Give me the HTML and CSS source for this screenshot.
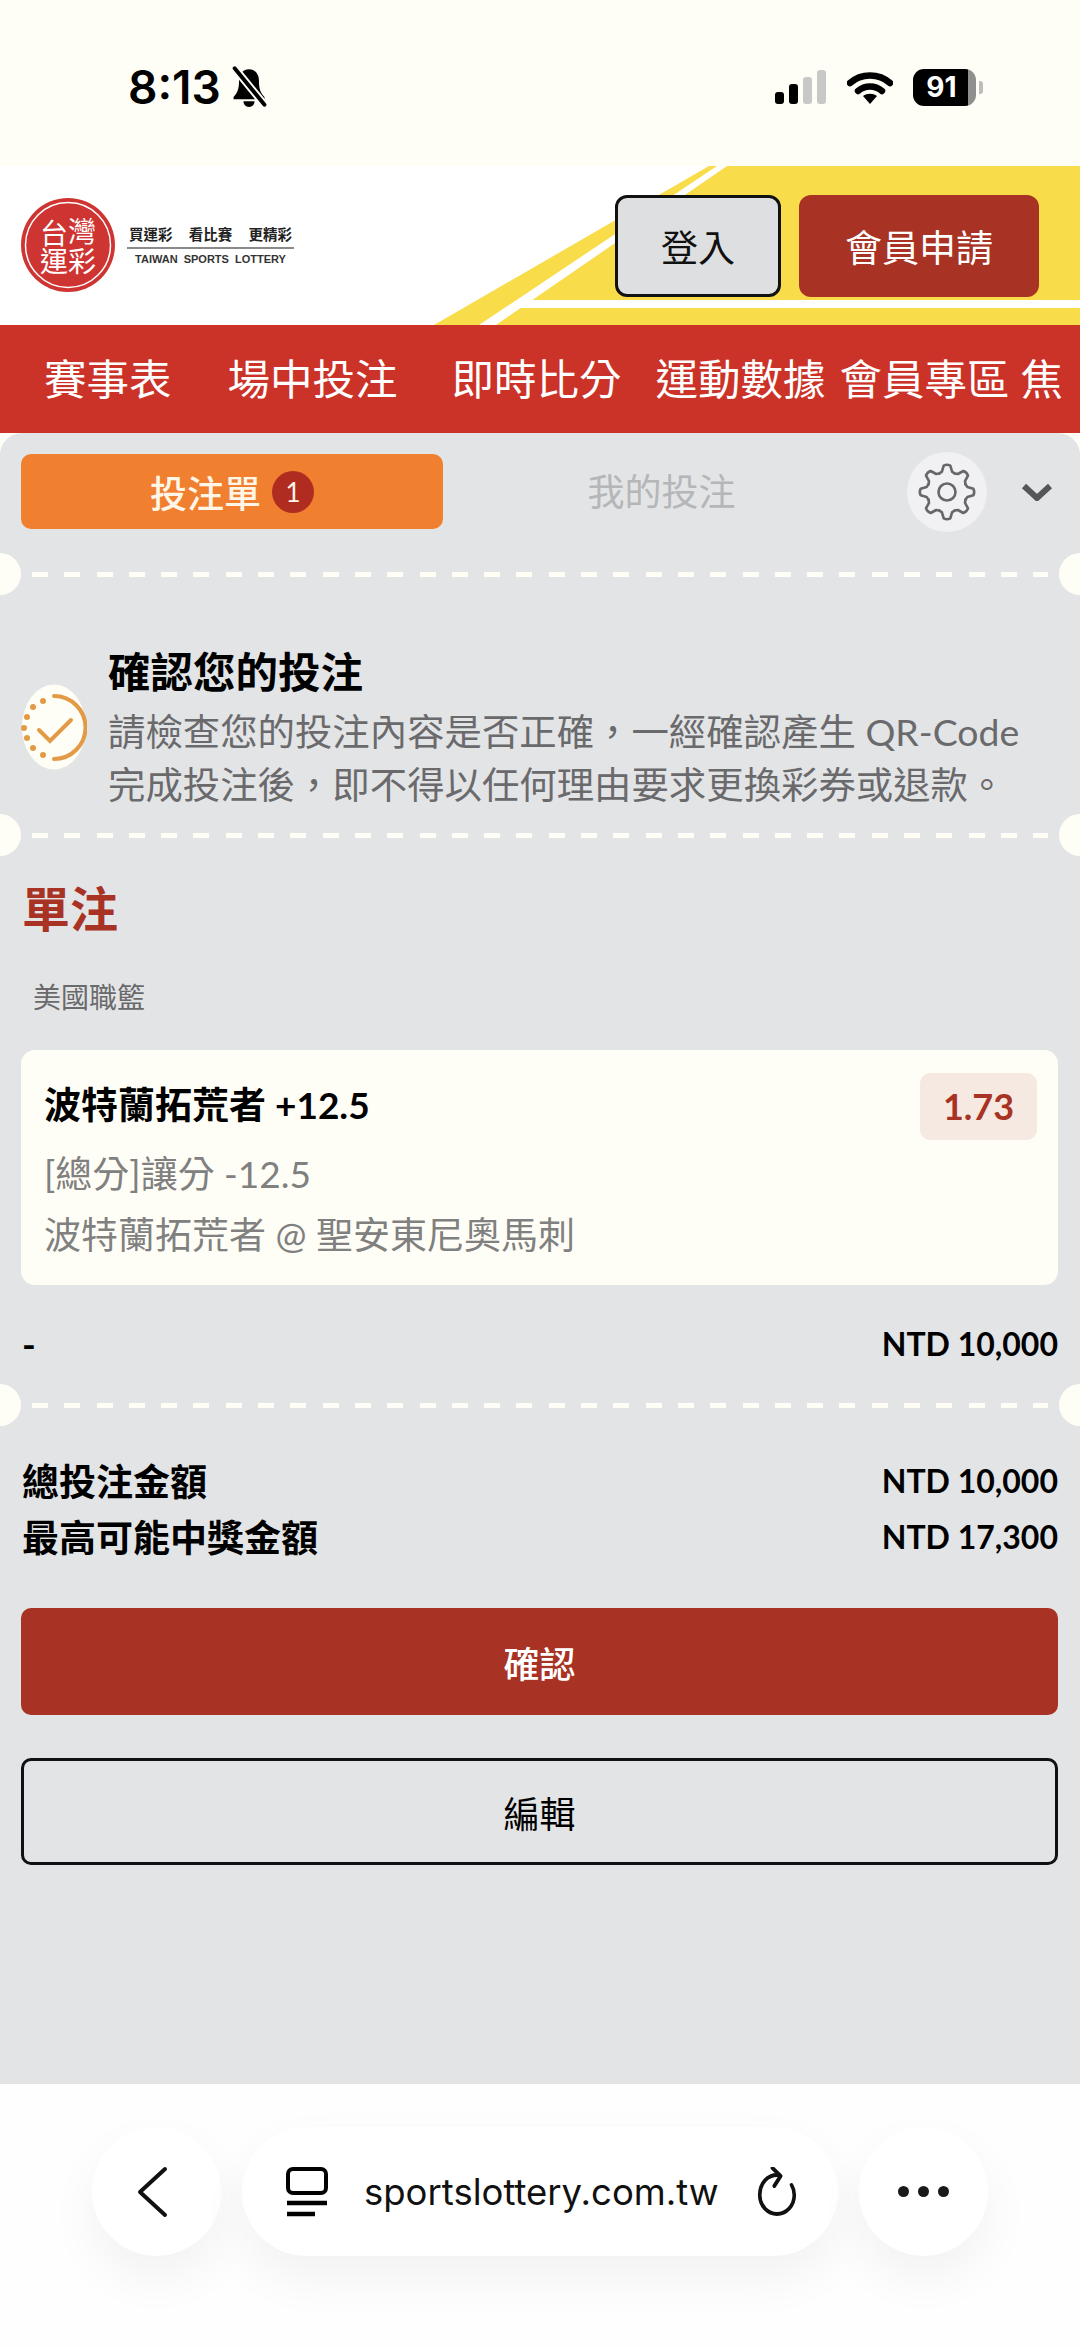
FILE: index.html
```html
<!DOCTYPE html>
<html lang="zh-TW">
<head>
    <meta charset="utf-8">
    <title>投注單</title>
    <link rel="stylesheet" href="styles.css">
</head>

<body>
<div class="page">
    <!-- 狀態列 -->
    <div class="statusBar">
        <div class="statusLeft">
            <span class="clock">8:13</span>
            <svg class="bell" viewBox="0 0 36 38" width="40" height="42">
                <path d="M18 3c-6 0-9 5-9 10 0 7-1 11-5 15v2h28v-2c-4-4-5-8-5-15 0-5-3-10-9-10z" fill="#000"/>
                <path d="M13 32c0 3 2 5 5 5s5-2 5-5z" fill="#000"/>
                <path d="M5 2l27 33" stroke="#fffef6" stroke-width="7"/>
                <path d="M5 2l27 33" stroke="#000" stroke-width="3.5" stroke-linecap="round"/>
            </svg>
        </div>
        <div class="statusRight">
            <svg viewBox="0 0 52 34" width="52" height="34">
                <rect x="0" y="22" width="9" height="12" rx="3" fill="#000"/>
                <rect x="14" y="14" width="9" height="20" rx="3" fill="#000"/>
                <rect x="28" y="7" width="9" height="27" rx="3" fill="#c8c8c6"/>
                <rect x="42" y="0" width="9" height="34" rx="3" fill="#c8c8c6"/>
            </svg>
            <svg class="wifi" viewBox="0 0 46 33" width="46" height="33">
                <path d="M3 12c11-10 29-10 40 0" fill="none" stroke="#000" stroke-width="6.5" stroke-linecap="round"/>
                <path d="M11 20c7-6 17-6 24 0" fill="none" stroke="#000" stroke-width="6.5" stroke-linecap="round"/>
                <path d="M23 33l-7-8c4-3 10-3 14 0z" fill="#000"/>
            </svg>
            <div class="battery"><span class="batteryNum">91</span></div>
            <span class="batteryNub"></span>
        </div>
    </div>

    <!-- 標頭 -->
    <header class="siteHeader">
        <svg class="headerBg" viewBox="0 0 1080 159" width="1080" height="159">
            <polygon points="709,0 1080,0 1080,159 434,159" fill="#f9dc4a"/>
            <polygon points="717,0 727,0 496,159 479,159" fill="#fff"/>
            <rect x="521" y="134" width="559" height="8" fill="#fff"/>
        </svg>
        <div class="logo">
            <svg class="logoMark" viewBox="0 0 96 96" width="96" height="96">
                <circle cx="48" cy="48" r="47" fill="#ce3431"/>
                <circle cx="48" cy="48" r="42.5" fill="none" stroke="#fff" stroke-width="1.5"/>
                <text class="logoChar" x="20" y="47">台</text>
                <text class="logoChar" x="48" y="45">灣</text>
                <text class="logoChar" x="20" y="75">運</text>
                <text class="logoChar" x="48" y="75">彩</text>
            </svg>
            <div class="logoText">
                <div class="logoSlogan"><span>買運彩</span><span>看比賽</span><span>更精彩</span></div>
                <div class="logoEng">TAIWAN SPORTS LOTTERY</div>
            </div>
        </div>
        <div class="headerBtns">
            <button class="loginBtn">登入</button>
            <button class="joinBtn">會員申請</button>
        </div>
    </header>

    <!-- 主選單 -->
    <nav class="mainNav">
        <span class="navItem">賽事表</span>
        <span class="navItem">場中投注</span>
        <span class="navItem">即時比分</span>
        <span class="navItem">運動數據</span>
        <span class="navItem">會員專區</span>
        <span class="navItem">焦</span>
    </nav>

    <!-- 投注單 -->
    <main class="slip">
        <div class="tabs">
            <div class="tabActive">投注單<span class="tabBadge">1</span></div>
            <div class="tabOther">我的投注</div>
            <div class="gearWrap">
                <svg viewBox="0 0 60 60" width="60" height="60">
                    <defs>
                        <path id="tooth" d="M22.35 11.52L24.92 9.62 26.71 3.6Q30 2 33.29 3.6L35.08 9.62 37.65 11.52"/>
                    </defs>
                    <g fill="none" stroke="#66676a" stroke-width="2.6" stroke-linejoin="round" stroke-linecap="round">
                        <use href="#tooth"/>
                        <use href="#tooth" transform="rotate(45 30 30)"/>
                        <use href="#tooth" transform="rotate(90 30 30)"/>
                        <use href="#tooth" transform="rotate(135 30 30)"/>
                        <use href="#tooth" transform="rotate(180 30 30)"/>
                        <use href="#tooth" transform="rotate(225 30 30)"/>
                        <use href="#tooth" transform="rotate(270 30 30)"/>
                        <use href="#tooth" transform="rotate(315 30 30)"/>
                        <circle cx="30" cy="30" r="8.5"/>
                    </g>
                </svg>
            </div>
            <svg class="chevron" viewBox="0 0 32 18" width="32" height="18">
                <path d="M3 3l13 12L29 3" fill="none" stroke="#55565a" stroke-width="6"/>
            </svg>
        </div>

        <div class="perf perfTop"></div>

        <section class="notice">
            <svg class="noticeIcon" viewBox="0 0 66 86" width="66" height="86">
                <ellipse cx="33" cy="43" rx="32" ry="42.5" fill="#fffef6"/>
                <g fill="none" stroke="#e39a45" stroke-width="4" stroke-linecap="round">
                    <path d="M33 12a31.500 31.500 0 0 1 0 63"/>
                    <path d="M18 46l11 11 21-21"/>
                </g>
                <g fill="#e39a45">
                    <circle cx="22" cy="17" r="3"/>
                    <circle cx="12" cy="23" r="3"/>
                    <circle cx="6" cy="33" r="3"/>
                    <circle cx="3" cy="44" r="3"/>
                    <circle cx="6" cy="54" r="3"/>
                    <circle cx="12" cy="64" r="3"/>
                    <circle cx="22" cy="71" r="3"/>
                </g>
            </svg>
            <div class="noticeText">
                <h2 class="noticeTitle">確認您的投注</h2>
                <p class="noticeDesc">請檢查您的投注內容是否正確，一經確認產生 QR-Code<br>完成投注後，即不得以任何理由要求更換彩券或退款。</p>
            </div>
        </section>

        <div class="perf"></div>

        <h1 class="betType">單注</h1>
        <div class="league">美國職籃</div>

        <div class="betCard">
            <div class="betMain">
                <div class="betTitle">波特蘭拓荒者 +12.5</div>
                <div class="oddsChip">1.73</div>
            </div>
            <div class="betSub">[總分]讓分 -12.5</div>
            <div class="betSub">波特蘭拓荒者 @ 聖安東尼奧馬刺</div>
        </div>

        <div class="amountRow stakeRow"><span>-</span><span class="money">NTD 10,000</span></div>

        <div class="perf perfLast"></div>

        <div class="amountRow totalRow"><span>總投注金額</span><span class="money">NTD 10,000</span></div>
        <div class="amountRow totalRow"><span>最高可能中獎金額</span><span class="money">NTD 17,300</span></div>

        <button class="confirmBtn">確認</button>
        <button class="editBtn">編輯</button>
    </main>

    <!-- 瀏覽器工具列 -->
    <footer class="browserBar">
        <div class="roundBtn">
            <svg class="backIcon" viewBox="0 0 32 52" width="32" height="52">
                <path d="M29 3L4 26l25 23" fill="none" stroke="#111" stroke-width="4" stroke-linecap="round" stroke-linejoin="round"/>
            </svg>
        </div>
        <div class="urlPill">
            <svg class="tabsIcon" viewBox="0 0 42 50" width="42" height="50">
                <rect x="2" y="2" width="38" height="24" rx="5" fill="none" stroke="#000" stroke-width="4"/>
                <path d="M1 36h40" stroke="#000" stroke-width="4.500"/>
                <path d="M1 47h28" stroke="#000" stroke-width="4.500"/>
            </svg>
            <span class="urlText">sportslottery.com.tw</span>
            <svg class="reload" viewBox="0 0 44 50" width="40" height="50" preserveAspectRatio="none">
                <path d="M24 8C12 7 3 16 3 28c0 11 9 19 19 19s19-8 19-19c0-4-1-7-3-10" fill="none" stroke="#111" stroke-width="4" stroke-linecap="round"/>
                <path d="M17 1l9 8-7 10" fill="none" stroke="#111" stroke-width="4" stroke-linecap="round" stroke-linejoin="round"/>
            </svg>
        </div>
        <div class="roundBtn">
            <div class="moreDots"><i></i><i></i><i></i></div>
        </div>
    </footer>
</div>
</body>

</html>
```
FILE: styles.css
```css
/* 全局 */
:root {
    --cream: #fffef6;
    --panel: #e3e4e6;
    --darkRed: #a83324;
    --cjk: Lato, "Noto Sans CJK TC", sans-serif;
}

* {
    margin: 0px;
    padding: 0px;
    box-sizing: border-box;
}

body {
    width: 1080px;
    height: 2348px;
    overflow: hidden;
    background-color: var(--cream);
    font-family: var(--cjk);
}

.page {
    display: flex;
    flex-direction: column;
    width: 1080px;
    height: 2348px;
    overflow: hidden;
}

/* 狀態列 */
.statusBar {
    display: flex;
    justify-content: space-between;
    align-items: center;
    height: 166px;
    padding: 8px 97px 0 128px;
    background-color: var(--cream);
}

.statusLeft,
.statusRight {
    display: flex;
    align-items: center;
}

.clock {
    font-family: Inter, sans-serif;
    font-size: 46px;
    font-weight: 600;
    color: #000;
}

.bell {
    margin-left: 8px;
}

.wifi {
    margin-left: 20px;
}

.battery {
    display: flex;
    justify-content: center;
    align-items: center;
    width: 63px;
    height: 37px;
    margin-left: 20px;
    padding-right: 6px;
    border-radius: 11px;
    background: linear-gradient(90deg, #000 88%, #8f8f8d 88%);
}

.batteryNum {
    font-family: Inter, sans-serif;
    font-size: 28px;
    font-weight: 700;
    color: #fff;
}

.batteryNub {
    width: 4px;
    height: 13px;
    margin-left: 3px;
    border-radius: 0 3px 3px 0;
    background-color: #bdbdbb;
}

/* 標頭 */
.siteHeader {
    position: relative;
    display: flex;
    justify-content: space-between;
    align-items: flex-start;
    height: 159px;
    padding: 29px 41px 0 20px;
    background-color: #fff;
}

.headerBg {
    position: absolute;
    left: 0;
    top: 0;
}

.logo {
    position: relative;
    display: flex;
    align-items: center;
    margin-top: 2px;
}

.logoChar {
    font-size: 28px;
    font-weight: 400;
    fill: #fff;
}

.logoText {
    width: 167px;
    margin-left: 11px;
}

.logoSlogan {
    display: flex;
    justify-content: space-between;
    padding: 0 2px 2px;
    font-size: 14.500px;
    line-height: 20px;
    font-weight: 700;
    color: #222;
    border-bottom: 2px solid #8a8a8a;
}

.logoEng {
    margin-top: 3px;
    font-family: "Liberation Sans", sans-serif;
    font-size: 11px;
    font-weight: 700;
    line-height: 14px;
    word-spacing: 3px;
    text-align: center;
    color: #333;
}

.headerBtns {
    position: relative;
    display: flex;
    gap: 18px;
}

.loginBtn,
.joinBtn {
    height: 102px;
    font-family: var(--cjk);
    font-size: 37px;
    border-radius: 12px;
}

.loginBtn {
    width: 166px;
    color: #111;
    background-color: #dedfe0;
    border: 3px solid #111;
}

.joinBtn {
    width: 240px;
    color: #fff;
    background-color: var(--darkRed);
    border: none;
}

/* 主選單 */
.mainNav {
    display: flex;
    align-items: center;
    height: 108px;
    padding-left: 44px;
    overflow: hidden;
    white-space: nowrap;
    background-color: #cb3228;
}

.navItem {
    flex: none;
    font-size: 42.500px;
    line-height: 52px;
    color: #fff;
}

.navItem:nth-child(2) {
    margin-left: 56px;
}

.navItem:nth-child(3) {
    margin-left: 54px;
}

.navItem:nth-child(4) {
    margin-left: 34px;
}

.navItem:nth-child(5) {
    margin-left: 14px;
}

.navItem:nth-child(6) {
    margin-left: 11px;
}

/* 投注單面板 */
.slip {
    flex: none;
    height: 1651px;
    padding-top: 21px;
    background-color: var(--panel);
    border-radius: 22px 22px 0 0;
}

.tabs {
    display: flex;
    align-items: center;
    height: 75px;
    padding-left: 21px;
}

.tabActive {
    display: flex;
    justify-content: center;
    align-items: center;
    gap: 11px;
    width: 422px;
    height: 75px;
    font-size: 37px;
    font-weight: 500;
    color: #fff6e8;
    background-color: #f08030;
    border-radius: 10px;
}

.tabBadge {
    display: flex;
    justify-content: center;
    align-items: center;
    width: 42px;
    height: 42px;
    font-size: 26px;
    font-weight: 400;
    border-radius: 50%;
    background-color: #b02c20;
}

.tabOther {
    width: 437px;
    padding-bottom: 4px;
    font-size: 37px;
    color: #b5b6b8;
    text-align: center;
}

.gearWrap {
    display: flex;
    justify-content: center;
    align-items: center;
    width: 80px;
    height: 80px;
    margin-left: 27px;
    border-radius: 50%;
    background-color: #f1f1f3;
}

.chevron {
    margin-left: 34px;
}

/* 票券虛線和缺口 */
.perf {
    position: relative;
    height: 5px;
    padding: 0 32px;
    background: repeating-linear-gradient(90deg, var(--cream) 0 16px, transparent 16px 32.300px) content-box;
}

.perf::before,
.perf::after {
    content: "";
    position: absolute;
    top: -19px;
    width: 42px;
    height: 42px;
    border-radius: 50%;
    background-color: var(--cream);
}

.perf::before {
    left: -21px;
}

.perf::after {
    right: -21px;
}

.perfTop {
    margin-top: 43px;
}

.perfLast {
    margin-top: 35px;
}

/* 確認提示 */
.notice {
    display: flex;
    align-items: flex-end;
    gap: 21px;
    height: 256px;
    padding: 0 0 22px 21px;
}

.noticeIcon {
    flex: none;
    margin-bottom: 41px;
}

.noticeTitle {
    font-size: 42.500px;
    line-height: 56px;
    font-weight: 700;
    color: #000;
}

.noticeDesc {
    margin-top: 5px;
    font-size: 37.400px;
    line-height: 53px;
    color: #6a6a6c;
    white-space: nowrap;
}

/* 單注 */
.betType {
    margin: 39px 0 0 22px;
    font-size: 48px;
    line-height: 64px;
    font-weight: 700;
    color: var(--darkRed);
}

.league {
    margin: 37px 0 0 33px;
    font-size: 28px;
    line-height: 38px;
    color: #6a6a6c;
}

.betCard {
    margin: 34px 22px 0 21px;
    height: 235px;
    padding: 22px 21px 0 23px;
    background-color: var(--cream);
    border-radius: 14px;
}

.betMain {
    display: flex;
    justify-content: space-between;
    align-items: center;
    height: 68px;
}

.betTitle {
    margin-top: -3px;
    font-size: 37px;
    line-height: 50px;
    font-weight: 700;
    color: #000;
}

.oddsChip {
    width: 117px;
    height: 67px;
    font-size: 36px;
    font-weight: 700;
    line-height: 67px;
    text-align: center;
    color: var(--darkRed);
    background-color: #f5e9e1;
    border-radius: 10px;
}

.betSub {
    margin-top: 11px;
    font-size: 37px;
    line-height: 50px;
    color: #808080;
}

.betSub:nth-child(2) {
    margin-top: 9px;
}

.amountRow {
    display: flex;
    justify-content: space-between;
    align-items: center;
    margin: 0 22px;
    font-size: 37px;
    font-weight: 700;
    color: #000;
}

.stakeRow {
    height: 50px;
    margin-top: 33px;
}

.totalRow {
    height: 50px;
    margin-top: 6px;
}

.perfLast + .totalRow {
    margin-top: 47px;
}

.money {
    font-size: 32px;
}

.confirmBtn,
.editBtn {
    display: block;
    width: 1037px;
    margin-left: 21px;
    font-family: var(--cjk);
    font-size: 36px;
    border-radius: 10px;
}

.confirmBtn {
    height: 107px;
    margin-top: 47px;
    font-weight: 500;
    color: #fff;
    background-color: var(--darkRed);
    border: none;
}

.editBtn {
    height: 107px;
    margin-top: 43px;
    color: #000;
    background-color: transparent;
    border: 3px solid #111;
}

/* 瀏覽器工具列 */
.browserBar {
    flex: 1;
    display: flex;
    gap: 21px;
    padding: 43px 0 0 92px;
    background-color: #fefefe;
}

.roundBtn,
.urlPill {
    display: flex;
    align-items: center;
    height: 129px;
    border-radius: 65px;
    background-color: #fff;
    box-shadow: 0 22px 50px rgba(0, 0, 0, 0.05);
}

.roundBtn {
    justify-content: center;
    width: 129px;
}

.backIcon {
    margin-right: 9px;
}

.urlPill {
    width: 596px;
    padding-left: 44px;
}

.tabsIcon {
    flex: none;
}

.urlText {
    margin-left: 36px;
    font-family: Inter, sans-serif;
    font-size: 36.500px;
    color: #111;
    white-space: nowrap;
}

.reload {
    flex: none;
    margin-left: 38px;
}

.moreDots {
    display: flex;
    gap: 9px;
}

.moreDots i {
    width: 11px;
    height: 11px;
    border-radius: 50%;
    background-color: #1a1a1a;
}
```
